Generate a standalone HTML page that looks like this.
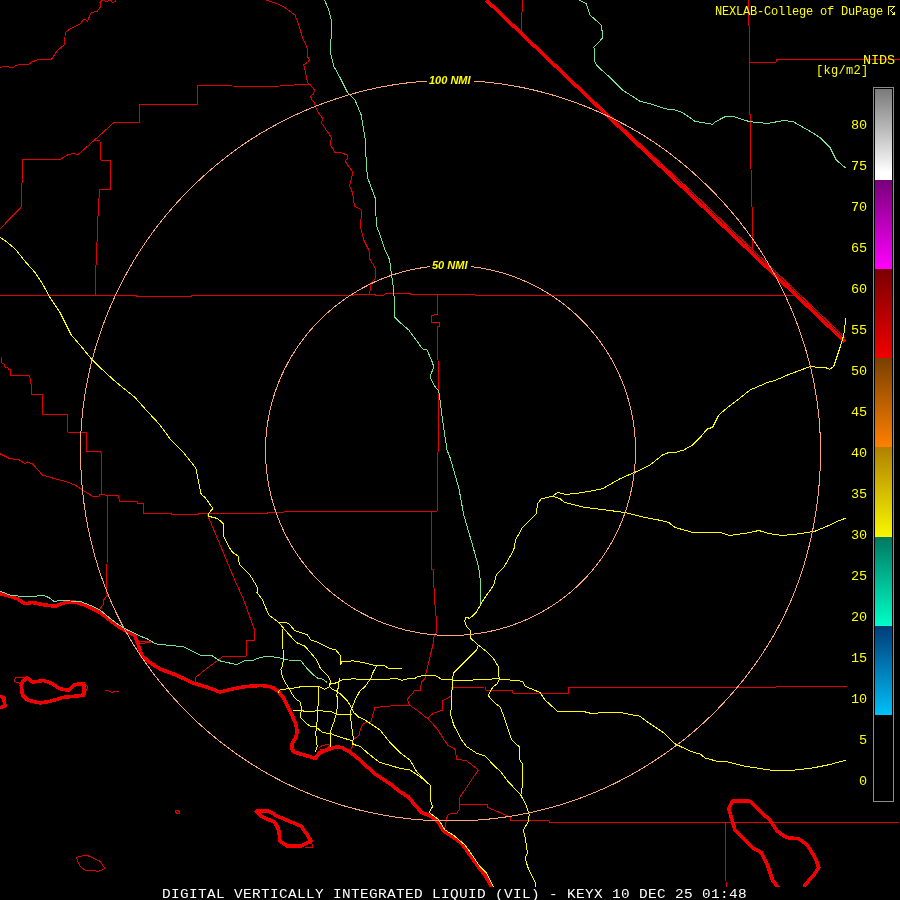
<!DOCTYPE html>
<html><head><meta charset="utf-8"><style>
html,body{margin:0;padding:0;background:#000;width:900px;height:900px;overflow:hidden}
#map{position:absolute;left:0;top:0}
.mono{font-family:"Liberation Mono",monospace;position:absolute;white-space:pre;line-height:1;will-change:transform}
.lab{font-family:"Liberation Mono",monospace;position:absolute;right:33px;color:#ffff00;font-size:13.5px;letter-spacing:-0.1px;line-height:1;text-align:right;will-change:transform}
#cb{position:absolute;left:873px;top:87px;width:19px;height:713px;border:1px solid #8c8c8c}
.seg{position:absolute;left:1px;width:17px}
</style></head><body>
<svg id="map" width="900" height="900" viewBox="0 0 900 900" fill="none" stroke-linejoin="round" stroke-linecap="round" shape-rendering="crispEdges">
<polyline points="0,67.5 5,66 9,67 12.5,68 16,65.5 20,64.5 24,64 29,64 32,62 37,60 41,59 49,59.5 51,60 57,51 64,45 65.5,32.5 69,29.5 76,26 80,24 84,19 87.5,21 91,13 97.5,11 101,6 100,2.5 102.5,0" stroke="#e00000" stroke-width="1"/>
<polyline points="104,0 105,1 108,1 111,0" stroke="#e00000" stroke-width="1"/>
<polyline points="111,0 112.5,2.5 115,1.5 116,0" stroke="#e00000" stroke-width="1"/>
<polyline points="0,228.75 3.75,225 21,207.5 23,159 61,159 67.5,155 74,153 77.5,155 94,140.5 114,122.5 139,122.5 139,104.5 197.5,104.5 198,85.5 225,85.5 236,86.25 276,86.25 293.75,85 310,84.5" stroke="#e00000" stroke-width="1"/>
<polyline points="94,140.5 100,141 100.5,160 110.5,160 110.5,189 99.5,189 97.5,225 97,242.5 95.5,276.25 95.5,295" stroke="#e00000" stroke-width="1"/>
<polyline points="266.25,0 277.5,3.75 285,7.5 295,15 298.75,25 302.5,37.5 307,47.5 308,57.5 309.5,60 307.5,62.5 303.75,64.5 305.5,72.5 307.5,82.5 311.25,86.25 314.5,90 313.75,93.75 310.5,96.25 312,100 314.5,102.5 315.5,107.5 320,115 323,118.75 321.25,122.5 326.25,130 331.25,137.5 330.5,145 335,152.5 342,153 347,155 347.5,158.75 345,161.25 349.5,167.5 353,172.5 351.25,178.75 349.5,186.25 352.5,192.5 354.5,206.25 360,208.75 361.75,211.25 361.25,217.5 360,225 361.25,230 363.75,240 368.75,250 370,256.25 369.5,258.75 375,267.5 375.5,278.75 371.25,282.5 369.5,294.5" stroke="#e00000" stroke-width="1"/>
<polyline points="522.5,0 521.25,32.5" stroke="#e00000" stroke-width="1"/>
<polyline points="748.75,0 749.5,77.5 750.5,150 752.5,225 752.5,250" stroke="#e00000" stroke-width="1"/>
<polyline points="749.5,62 776.25,62 776.25,59.5 900,59.5" stroke="#e00000" stroke-width="1"/>
<polyline points="0,295.5 136.25,295.5 136.25,296.75 191.25,296.75 191.25,295.5 350,295.5 357.5,294.5 375,294.5 376.25,295.5 383.75,295.5 385,293.75 410,293.75 411.25,294.5 475,294.5 475,295.5 795,295.5" stroke="#e00000" stroke-width="1"/>
<polyline points="1.25,357.5 1.25,362.5 3.75,363.75 5,367 7.5,367.5 8.75,369.5 10.5,370 10.5,375.5 29.5,375.5 31.25,385 31.25,394.5 42.5,394.5 42.5,414.25 67.5,414.25 67.5,432 86.25,432 86.25,451.25 100,451.25 101.25,453.75 101.25,494.5" stroke="#e00000" stroke-width="1"/>
<polyline points="437,294.5 437,314.5 431.25,315.5 431.25,322.5 439.5,323 439.5,326.25 437,327 437,340 438.75,375 438.75,450 437,455 437,511.25" stroke="#e00000" stroke-width="1"/>
<polyline points="0,453.75 10,458.75 18.75,459.5 25,463.75 27.5,462 32.5,463.75 42.5,475 57.5,479.5 65,481.25 75,485 82.5,490 92.5,496.25 98.75,496.25 100,494.5 105,495" stroke="#e00000" stroke-width="1"/>
<polyline points="105,495 118,495 119.5,501.25 137.5,501.25 138,503.75 143.75,503.75 143.75,513.75 170.9,513.1 171.7,514.3 198.1,514.3 198.9,513.1 267.3,513.1 268.1,512.3 325,511.25 437,511.25" stroke="#e00000" stroke-width="1"/>
<polyline points="107.5,495 107.5,545 106.25,592.5 107.5,595 103.75,600 103,605 100,608.75" stroke="#e00000" stroke-width="1"/>
<polyline points="207.4,514.6 234.7,580 243.75,600 250,617.5 254.5,629.7 254.5,640.1 246,640.1 246,656.1 223.3,656.1 212,664.6 195.9,676.9 195.9,682.6" stroke="#e00000" stroke-width="1"/>
<polyline points="431.25,511.25 431.25,568.75 433,570 435,605 435.8,613.3 436.7,623.3 436.3,632.5 434.2,635 433.3,643.3 430,656.7 426.7,670 425,678.3 421.7,681.7 420,690.8 414.2,690.8 413.3,692.5 407.5,699.2 409.2,705 416.7,710 428.3,719.2 436.7,728.3 444.2,740 448.3,745.8 455,749.2 456.7,759.2 466.7,760.8 478.3,770 459.2,798.3 460,808.3 456.7,813.3 448.3,814.2 446.7,818.3 445,827.5" stroke="#e00000" stroke-width="1"/>
<polyline points="409.2,705 391.7,705.8 375,707.5 373.3,713.3 370.8,721.7 363.3,723.3 360.6,728.9 358.9,735.6 355.6,737.8 352.8,740 352.8,746.7 350,750" stroke="#e00000" stroke-width="1"/>
<polyline points="428.3,719.2 429.2,716.7 433.3,713.3 442.5,710 442.5,700.8 451.7,695.8 451.7,687.5 485,687 486.25,690.5 512.5,690.5 512.5,693 568.75,693 568.75,687 776.25,687 776.25,686.25 846.25,686.25" stroke="#e00000" stroke-width="1"/>
<polyline points="460.8,804.2 487.5,804.2 487.5,807.5 510,816.7 510.8,820.5 548.75,820.5 550,822.5 898.75,822.5" stroke="#e00000" stroke-width="1"/>
<polyline points="725,822.5 725,855 726.25,887.5" stroke="#e00000" stroke-width="1"/>
<polyline points="139.3,642 144,641 150.6,642 140.2,643.8 139.3,642" stroke="#e00000" stroke-width="1"/>
<polyline points="318.9,748 322,745.5 328,744.4 330,746 326,749 320,750" stroke="#e00000" stroke-width="1"/>
<polyline points="175,811 178,810 180,813 177,814 175,811" stroke="#e00000" stroke-width="1"/>
<polyline points="76.25,857.5 86.25,855 100,861.25 105,868.75 98.75,871.25 85,870 80,866.25 76.25,857.5" stroke="#e00000" stroke-width="1"/>
<polyline points="14,681 16,677 25,677.5 27,680 21,684 14,681" stroke="#e00000" stroke-width="1"/>
<polyline points="83,683 88,687 85,693 83,694" stroke="#e00000" stroke-width="1"/>
<polyline points="105,690.5 109,691 112,692.5 115,691.5 118.75,692" stroke="#e00000" stroke-width="1"/>
<polyline points="311.25,841.25 313,848 305,847" stroke="#e00000" stroke-width="1"/>
<polyline points="486,-0.2 600,106.4 700,199.6 845,337.7" stroke="#e00000" stroke-width="1"/>
<polyline points="0,593.75 10,596.25 17.5,598.75 25,603.75 32.5,602.5 45,605 55,606.25 65,602.5 75,602 85,605 100,612.5 110,620.2 117.6,625.9 127,631.6 134.6,635.3 138.3,644.8 142.1,656.1 151.6,663.7 161,669.3 176.1,675 193.1,683 208,687.5 220,692 232,689 246,686.5 261.1,685.4 270,686.7 274.4,688.3 278.9,692.2 283.3,697.8 286.7,704.4 291.1,713.3 295.6,723.3 297.2,731.1 296.1,736.7 292.2,743.3 291.7,748.9 294.4,752.2 302.2,754.4 310,756.7 315.6,758.3 318.9,753.3 323.3,751.1 330,748.9 336.7,746.7 342.2,747.8 350,752.2 357.8,758.3 375,773.75 390,783.75 400,791.7 408.3,796.7 415,805 421.7,812.5 430,815.8 438.3,821.7 443.3,830.8 450,835 461.7,843.3 470,855 478.3,866.7 485,875 491.7,886.7 493,890" stroke="#f00000" stroke-width="3.6"/>
<polyline points="22.5,681.25 27.5,678 32.5,682 43.75,680.5 52.5,683.75 60,688.75 68.75,690.5 75,684.5 83.75,683.75 83.75,695 75,696.25 62.5,697.5 58.75,698.75 50,701.25 40,703 27.5,700 22.5,695 21.25,685 22.5,681.25" stroke="#f00000" stroke-width="3.6"/>
<polyline points="0,696.25 3.75,697.5 5,706.25 0,707.5" stroke="#f00000" stroke-width="3.6"/>
<polyline points="256.25,811.25 268.75,811.25 277.5,816.25 292.5,822.5 301.25,826.25 307.5,835 311.25,841.25 300,846.25 287.5,846.25 280,841.25 278.75,830 275,822.5 261.25,816.25 256.25,811.25" stroke="#f00000" stroke-width="3.6"/>
<polyline points="780,890 772.5,880 767.5,865 761.25,852.5 752.5,847.5 742.5,837.5 735,830 731.25,817.5 728.75,808.75 732.5,801.25 750,801.25 760,811.25 770,820 777.5,831.25 786.25,837.5 798.75,838.75 807.5,845 816.25,860 818.75,867.5 813.75,875 805,885 803.75,890" stroke="#f00000" stroke-width="3.6"/>
<polyline points="486.2,0 845,341.7" stroke="#f00000" stroke-width="3.6" stroke-linecap="butt"/>
<polyline points="324.5,0 328.75,10 331.25,20 331.25,32.5 330.5,52.5 333.75,66.25 340,77.5 347.5,92.5 355,100 361.25,115 362.5,122.5 365,137.5 365.5,145 366.25,162.5 367.5,177.5 371.25,187.5 375.5,198.75 376.25,225 380,235 385,250 388.75,257.5 390,262.5 391.25,272.5 393.75,290 395,317.5 400,322.5 408.75,330 422.5,348.75 427,350 432.5,362.5 433.75,367.5 430,376.25 433.75,385 438.75,391.25 440,400 442.5,420 447,450 450,457.5 458.75,487.5 463.75,515 472.5,545 478.75,567.5 480.5,582.5 480.5,603.75" stroke="#78e098" stroke-width="1"/>
<polyline points="578.75,0 586.25,3.75 590,15 601.25,25 603,37.5 595,46.25 593.75,47.5 595,50 594.5,61.25 597.5,66.25 610,77.5 622.5,90 640,101.25 650,103.75 665,108.75 675,110 682.5,112.5 695,121.25 712.5,124.25 716.25,121.25 725,116.75 732.5,116.25 740,118.75 750,121.75 762.5,123 770,123 782.5,120.75 792.5,121.25 800,125.5 810,131.25 820,137.5 830,147.5 836.25,160 845,167.5" stroke="#78e098" stroke-width="1"/>
<polyline points="0,591.25 10,595 25,597 43.75,595.5 48.75,597.5 53.75,601.25 60,600.75 80,601.25 92.5,606.25 100,610 110,618.3 117.6,624 127,629.7 138.3,635.3 147.8,639.1 155.3,643.8 172.3,645.7 183.7,646.7 200.7,655.2 212,655.7 219.6,660.8 236.6,664.6 244.1,660.8 251.7,660.8 261.1,657.1 270.6,656.5 280,658 288.3,660 300.6,660.6 308.3,670 316.7,677.8 323.3,679.4 326.7,682.2" stroke="#78e098" stroke-width="1"/>
<polyline points="0,237.5 5,240.5 15,248.75 25,261.25 35,272.5 42.5,283.75 50,297.5 60,312.5 71.25,335 80,345 91.25,358.75 100,367.5 115,381.25 135,397.5 145,408.75 160,425 170.9,440 183.3,452.4 195.8,468 201.2,494.4 205.1,497.5 212.9,508.4 209,513.1 208.2,516.2 217.5,518.5 223.8,524 223.8,536.4 228.4,545.8 232.3,552 238.5,556.6 239.3,564.4 250.2,575.3 257.5,587.5 257,592.5 262.5,600 268.75,615 278.75,622.5 285,630 296.25,642.5 305,646.25 316.7,660 320.6,668.9 327.8,675.6 330.6,681.1 328.9,686.1 332.2,689.4 336.7,691.1 341.1,694.4 346.7,700 351.7,707.8 353.3,712.2 358.9,717.2 365,720 380,730 390,742.5 400,752.5 410,760 416.7,771.7 430,785 430,798.3 432.5,806.7 429.2,812.5 438.3,819.2 445,830 453.3,835 465,845 473.3,856.7 480,866.7 486.7,873.3 493.3,886.7" stroke="#ffff00" stroke-width="1"/>
<polyline points="278.75,622.5 285,622 289.17,624.17 295,630.83 303.33,633.33 307.5,635 310.83,640 318.33,642.5 323.33,645 330,648.33 335.83,650 340,655 340.83,664.17 341.67,661.67 353.33,660.83 363.33,662.5 370,664.2 376.7,665.8 385,665.8 387.5,668 401.7,668" stroke="#ffff00" stroke-width="1"/>
<polyline points="376.7,665.8 373.3,671.7 370.8,678.3 365,686.7 360,690.83 355.83,698.33 351.67,708.33 350,713.33 351.67,726.67 353.3,737.8 352.5,745" stroke="#ffff00" stroke-width="1"/>
<polyline points="282.5,630 283.3,660 282.2,666.7 280.6,669.4 281.7,671.7 282.2,676.7 285,682.2 288.3,687.2 291.1,692.2 293.9,696.7 296.7,700 300,701.7 301.1,706.7 301.7,710.6 300,714.4 301.1,718.3 305.6,722.8 310,726.1 315.6,726.7 318.9,729.4 322.8,732.8 330.6,733.3 335.6,735.6 342.2,737.8 352.2,740.6 353.3,744.4 360,746.25 370,755 380,762.5 400,768.3 410,770 420,776.7 430,785" stroke="#ffff00" stroke-width="1"/>
<polyline points="278.3,692.2 280,690 290,688.3 298.9,687.6 300,686.7 308.3,686.4 318.9,686.4 324.4,689.4 328.9,687.2 330.6,683.9 336.7,682.8 340,680.6 343.3,679.4 353.3,678.9 364.4,679.4 370,680 386.7,679.2 396.7,678.7 401.7,680.3 410,678.3 415,678.3 418.3,676.3 426.7,675.3 435,675.3 441.7,679.2 453.3,680 463.3,680.8 476.7,679.7 497.5,678.75 522.5,681.25 525,686.25 540,692.5 545,700 557.5,711.25 582.5,711.25 592.5,713.75 605,712 620,712.5 640,716.25 650,723.75 665,733.75 675,743.75 682.5,747.5 693.75,752.5 700,753.75 705,758 720,762 725,761.25 730,762.5 745,766.25 770,770 795,770 812.5,768 830,764.5 846.25,760" stroke="#ffff00" stroke-width="1"/>
<polyline points="318.9,686.4 317.8,711.1 316.7,726.7 315.6,733.3 316.7,741.1 317.2,746.7 315.6,751.7" stroke="#ffff00" stroke-width="1"/>
<polyline points="293.9,710.6 302.2,710.6 305.6,711.7 314.4,711.1 317.8,710.6 324.4,711.1 330,711.1 336.7,714.4 351.1,714.4" stroke="#ffff00" stroke-width="1"/>
<polyline points="339.4,678.9 337.8,690 336.7,695.6 337.8,698.9 337.2,707.8 336.1,714.4 333.9,722.2 331.1,728.9 330.6,733.3 330.6,746.7" stroke="#ffff00" stroke-width="1"/>
<polyline points="483.3,600 493.75,585 496.25,575 503.75,567.5 513.75,550 515.5,540 522.5,527.5 536.25,513.75 537.5,503.75 541.25,498.75 552.5,496.25 560,498.75 565,502.5 582.5,507 600,509.25 625,512.5 645,517.5 662.5,520.75 668.75,522.5 675,527.5 695,533 720,532.5 730,535.5 750,532.5 758.75,530.5 770,533.75 782.5,535.5 800,533.75 815,531.25 830,525 838.75,520.75 846.25,518" stroke="#ffff00" stroke-width="1"/>
<polyline points="483.3,600 476.7,611.7 470,618.3 465.8,617.5 464.7,620.8 466.7,626.7 470,630 470.8,638.3 478.3,645 486.7,651.7 493.3,658.3 498.3,666.7 499.2,680 496.7,684.2 493.3,686.7 490,691.7 488.3,695.8 495,703.3 500,706.7 503.3,715 508.3,730 511.7,740 519.2,746.7 520,760 523,765 522.5,785 520.8,795 526.7,806.7 529.2,815 528.3,821.7 523.3,830 525,836.7 527.5,853.3 525,858.3 528.3,868.3 535,881.7 535.3,887" stroke="#ffff00" stroke-width="1"/>
<polyline points="478.3,645 476.7,650 471.7,655 463.3,663.3 453.3,673.3 452.5,681.7 451.7,695 450.8,715 453.75,725 461.7,740 466.7,746.7 476.7,753.3 485,755.8 495,766.7 500,770.8 508.3,781.7 520,794.2" stroke="#ffff00" stroke-width="1"/>
<polyline points="552.5,496.25 557.5,492.5 565,494.25 575,493.75 590,491.25 602.5,488.75 620,478.75 640,470 650,465 662.5,455 667.5,453 675,452.5 683.75,450 692.5,445 700,437.5 707.5,428.75 712.5,427.5 718.75,415 727.5,407.5 737.5,400 750,390 767.5,382.5 775,380.5 787.5,375 807.5,367.5 811.25,366.25 820,368 825,367.5 830,369.25 833.75,366.25 840,347.5 843.75,335 845,325 845.75,318" stroke="#ffff00" stroke-width="1"/>
<polyline points="820.5,450.5 820.45,456.96 820.3,463.41 820.05,469.87 819.7,476.32 819.25,482.76 818.69,489.2 818.04,495.63 817.28,502.05 816.41,508.45 815.45,514.85 814.37,521.23 813.19,527.59 811.9,533.94 810.51,540.26 809,546.56 807.39,552.84 805.66,559.08 803.82,565.3 801.87,571.49 799.81,577.64 797.63,583.75 795.34,589.82 792.93,595.85 790.41,601.84 787.78,607.78 785.03,613.66 782.17,619.5 779.2,625.27 776.12,630.99 772.92,636.65 769.62,642.25 766.21,647.78 762.7,653.24 759.08,658.64 755.37,663.97 751.56,669.23 747.65,674.42 743.66,679.54 739.58,684.59 735.41,689.57 731.16,694.48 726.84,699.31 722.43,704.08 717.95,708.78 713.4,713.4 708.77,717.95 704.05,722.4 699.24,726.76 694.36,731.03 689.39,735.2 684.35,739.28 679.24,743.27 674.06,747.17 668.81,750.97 663.5,754.69 658.13,758.32 652.7,761.86 647.22,765.32 641.69,768.69 636.1,771.97 630.46,775.16 624.76,778.24 619.01,781.23 613.21,784.11 607.36,786.88 601.45,789.55 595.5,792.11 589.51,794.56 583.47,796.91 577.4,799.15 571.28,801.28 565.13,803.3 558.95,805.22 552.73,807.02 546.48,808.71 540.21,810.3 533.91,811.77 527.58,813.14 521.23,814.4 514.87,815.54 508.48,816.58 502.08,817.51 495.66,818.33 489.23,819.04 482.8,819.64 476.35,820.13 469.89,820.51 463.43,820.78 456.97,820.95 450.5,821 444.03,820.95 437.57,820.78 431.11,820.51 424.65,820.13 418.2,819.64 411.76,819.05 405.33,818.34 398.92,817.53 392.52,816.6 386.13,815.57 379.76,814.43 373.41,813.17 367.08,811.81 360.78,810.34 354.5,808.76 348.25,807.07 342.04,805.27 335.85,803.36 329.69,801.35 323.58,799.22 317.5,796.98 311.46,794.64 305.46,792.19 299.51,789.63 293.6,786.96 287.75,784.19 281.94,781.31 276.19,778.33 270.49,775.24 264.85,772.06 259.27,768.77 253.74,765.38 248.28,761.9 242.87,758.32 237.53,754.65 232.26,750.89 227.05,747.03 221.9,743.09 216.83,739.05 211.83,734.93 206.91,730.72 202.05,726.43 197.27,722.05 192.57,717.59 187.95,713.05 183.41,708.43 178.94,703.74 174.54,698.97 170.23,694.14 165.99,689.23 161.84,684.25 157.77,679.21 153.79,674.09 149.9,668.9 146.1,663.64 142.4,658.31 138.8,652.92 135.3,647.46 131.89,641.94 128.6,636.35 125.41,630.7 122.32,624.99 119.35,619.23 116.48,613.41 113.73,607.54 111.08,601.62 108.55,595.65 106.13,589.64 103.82,583.58 101.62,577.48 99.53,571.35 97.55,565.18 95.69,558.98 93.93,552.74 92.29,546.48 90.75,540.2 89.33,533.88 88.01,527.55 86.8,521.2 85.7,514.82 84.71,508.44 83.82,502.03 83.04,495.62 82.37,489.19 81.79,482.76 81.33,476.32 80.97,469.87 80.71,463.41 80.55,456.96 80.5,450.5 80.56,444.04 80.73,437.59 81.03,431.14 81.44,424.69 81.96,418.26 82.6,411.83 83.36,405.42 84.23,399.02 85.22,392.65 86.32,386.28 87.53,379.95 88.86,373.63 90.29,367.34 91.84,361.08 93.49,354.84 95.26,348.64 97.13,342.46 99.11,336.33 101.19,330.22 103.38,324.16 105.67,318.13 108.06,312.15 110.56,306.2 113.15,300.3 115.84,294.45 118.63,288.64 121.52,282.88 124.51,277.17 127.59,271.51 130.76,265.9 134.03,260.35 137.4,254.86 140.87,249.42 144.43,244.06 148.09,238.75 151.84,233.51 155.68,228.34 159.61,223.23 163.63,218.2 167.73,213.23 171.92,208.34 176.2,203.52 180.55,198.77 184.99,194.1 189.51,189.51 194.1,184.99 198.76,180.54 203.49,176.17 208.29,171.87 213.17,167.66 218.11,163.52 223.12,159.47 228.2,155.5 233.36,151.63 238.58,147.84 243.87,144.16 249.23,140.57 254.65,137.08 260.14,133.7 265.7,130.42 271.31,127.24 276.98,124.16 282.7,121.17 288.47,118.28 294.28,115.49 300.15,112.8 306.06,110.21 312.01,107.72 318,105.33 324.04,103.05 330.11,100.87 336.22,98.79 342.37,96.82 348.55,94.96 354.76,93.2 361.01,91.56 367.28,90.02 373.57,88.59 379.9,87.28 386.24,86.07 392.61,84.98 398.99,84 405.39,83.14 411.81,82.38 418.24,81.75 424.68,81.23 431.13,80.82 437.58,80.53 444.04,80.36 450.5,80.3 456.96,80.36 463.42,80.53 469.87,80.82 476.32,81.23 482.76,81.76 489.19,82.39 495.61,83.15 502.01,84.02 508.39,85 514.75,86.1 521.1,87.31 527.42,88.63 533.71,90.06 539.98,91.6 546.22,93.25 552.43,95.01 558.61,96.88 564.76,98.85 570.87,100.93 576.94,103.12 582.97,105.41 588.96,107.8 594.91,110.29 600.82,112.88 606.68,115.58 612.49,118.37 618.26,121.26 623.97,124.24 629.64,127.33 635.25,130.5 640.8,133.78 646.29,137.18 651.7,140.68 657.05,144.28 662.32,147.99 667.52,151.79 672.66,155.69 677.71,159.68 682.7,163.75 687.62,167.91 692.48,172.14 697.26,176.45 701.98,180.82 706.63,185.27 711.21,189.79 715.72,194.38 720.15,199.05 724.5,203.79 728.77,208.61 732.95,213.5 737.05,218.46 741.06,223.49 744.98,228.59 748.81,233.76 752.55,239 756.2,244.3 759.76,249.67 763.22,255.09 766.58,260.58 769.85,266.12 773.02,271.72 776.1,277.38 779.09,283.08 781.98,288.83 784.78,294.62 787.48,300.47 790.08,306.36 792.59,312.29 795,318.26 797.31,324.27 799.51,330.33 801.61,336.42 803.61,342.54 805.5,348.7 807.29,354.9 808.97,361.12 810.53,367.38 811.99,373.66 813.34,379.97 814.57,386.3 815.69,392.66 816.69,399.03 817.58,405.43 818.35,411.84 819.01,418.26 819.54,424.69 819.96,431.14 820.26,437.59 820.44,444.04 820.5,450.5" stroke="#f5a578" stroke-width="1"/>
<polyline points="635.5,450.5 635.39,456.96 635.06,463.41 634.52,469.84 633.75,476.25 632.77,482.64 631.57,488.99 630.15,495.29 628.52,501.55 626.68,507.74 624.61,513.87 622.34,519.93 619.86,525.9 617.17,531.79 614.27,537.58 611.17,543.26 607.87,548.83 604.37,554.29 600.68,559.61 596.8,564.8 592.74,569.85 588.5,574.75 584.08,579.5 579.5,584.08 574.75,588.5 569.85,592.74 564.8,596.8 559.61,600.68 554.29,604.37 548.83,607.87 543.26,611.17 537.58,614.27 531.79,617.17 525.9,619.86 519.93,622.34 513.87,624.61 507.74,626.68 501.55,628.52 495.29,630.15 488.99,631.57 482.64,632.77 476.25,633.75 469.84,634.52 463.41,635.06 456.96,635.39 450.5,635.5 444.04,635.39 437.59,635.06 431.16,634.5 424.75,633.73 418.37,632.73 412.02,631.51 405.73,630.08 399.48,628.43 393.29,626.56 387.18,624.48 381.13,622.19 375.18,619.68 369.31,616.97 363.53,614.06 357.87,610.94 352.32,607.63 346.88,604.12 341.57,600.42 336.4,596.54 331.37,592.48 326.48,588.24 321.75,583.83 317.17,579.25 312.76,574.52 308.52,569.63 304.46,564.6 300.58,559.43 296.88,554.12 293.37,548.68 290.06,543.13 286.94,537.47 284.03,531.69 281.32,525.82 278.81,519.87 276.52,513.82 274.44,507.71 272.57,501.52 270.92,495.27 269.49,488.98 268.27,482.63 267.27,476.25 266.5,469.84 265.94,463.41 265.61,456.96 265.5,450.5 265.61,444.04 265.96,437.6 266.53,431.16 267.33,424.76 268.35,418.38 269.6,412.05 271.07,405.76 272.76,399.53 274.67,393.37 276.79,387.28 279.13,381.26 281.67,375.33 284.42,369.5 287.37,363.76 290.51,358.13 293.85,352.61 297.38,347.22 301.09,341.95 304.98,336.81 309.04,331.8 313.28,326.94 317.67,322.23 322.23,317.67 326.94,313.28 331.8,309.04 336.81,304.98 341.95,301.09 347.22,297.38 352.61,293.85 358.13,290.51 363.76,287.37 369.5,284.42 375.33,281.67 381.26,279.13 387.28,276.79 393.37,274.67 399.53,272.76 405.76,271.07 412.05,269.6 418.38,268.35 424.76,267.33 431.16,266.53 437.6,265.96 444.04,265.61 450.5,265.5 456.96,265.61 463.4,265.95 469.84,266.51 476.25,267.3 482.62,268.31 488.96,269.54 495.26,271 501.49,272.67 507.67,274.55 513.77,276.66 519.8,278.97 525.75,281.49 531.6,284.22 537.35,287.15 543,290.29 548.54,293.61 553.95,297.13 559.24,300.83 564.4,304.72 569.42,308.78 574.29,313.02 579.01,317.42 583.58,321.99 587.98,326.71 592.22,331.58 596.28,336.6 600.17,341.76 603.87,347.05 607.39,352.46 610.71,358 613.85,363.65 616.78,369.4 619.51,375.25 622.03,381.2 624.34,387.23 626.45,393.33 628.33,399.51 630,405.74 631.46,412.04 632.69,418.38 633.7,424.75 634.49,431.16 635.05,437.6 635.39,444.04 635.5,450.5" stroke="#f5a578" stroke-width="1"/>
<rect x="427" y="74" width="47" height="12" fill="#000"/>
<rect x="430" y="258" width="41" height="12" fill="#000"/>
</svg>
<div style="position:absolute;left:428.5px;top:75.3px;font:italic bold 11px 'Liberation Sans',sans-serif;color:#ffff00;line-height:1;will-change:transform">100 NMI</div>
<div style="position:absolute;left:431.5px;top:260.3px;font:italic bold 11px 'Liberation Sans',sans-serif;color:#ffff00;line-height:1;will-change:transform">50 NMI</div>
<div class="mono" style="left:715px;top:6px;font-size:12px;letter-spacing:-0.2px;color:#ffff00">NEXLAB-College of DuPage</div>
<svg style="position:absolute;left:0;top:0" width="900" height="30" shape-rendering="crispEdges"><path d="M888.5 15V6.5H894.5M893.5 7.5L890.5 10.5L894 14" stroke="#ffff00" fill="none" stroke-width="1"/><path d="M891.5 15H895V11.5Z" fill="#ffff00"/></svg>
<div class="mono" style="left:863px;top:53.6px;font-size:13.5px;letter-spacing:-0.1px;color:#ffff00">NIDS</div>
<div class="mono" style="left:816px;top:64.5px;font-size:12px;letter-spacing:0.3px;color:#ffff00">[kg/m2]</div>
<div id="cb">
<div class="seg" style="top:1px;height:91px;background:linear-gradient(#7a7a7a,#ffffff 92%)"></div>
<div class="seg" style="top:92px;height:89px;background:linear-gradient(#780078,#ff00ff)"></div>
<div class="seg" style="top:181px;height:89px;background:linear-gradient(#7a0000,#f00000)"></div>
<div class="seg" style="top:270px;height:89px;background:linear-gradient(#784000,#ff8000)"></div>
<div class="seg" style="top:359px;height:90px;background:linear-gradient(#b08000,#f8f800)"></div>
<div class="seg" style="top:449px;height:89px;background:linear-gradient(#007860,#00ffc8)"></div>
<div class="seg" style="top:538px;height:89px;background:linear-gradient(#003c78,#00c0f8)"></div>
</div>
<div class="lab" style="top:774.65px">0</div>
<div class="lab" style="top:733.65px">5</div>
<div class="lab" style="top:692.65px">10</div>
<div class="lab" style="top:651.65px">15</div>
<div class="lab" style="top:610.65px">20</div>
<div class="lab" style="top:569.65px">25</div>
<div class="lab" style="top:528.65px">30</div>
<div class="lab" style="top:487.65px">35</div>
<div class="lab" style="top:446.65px">40</div>
<div class="lab" style="top:405.65px">45</div>
<div class="lab" style="top:364.65px">50</div>
<div class="lab" style="top:323.65px">55</div>
<div class="lab" style="top:282.65px">60</div>
<div class="lab" style="top:241.65px">65</div>
<div class="lab" style="top:200.65px">70</div>
<div class="lab" style="top:159.65px">75</div>
<div class="lab" style="top:118.65px">80</div>

<div style="position:absolute;left:0;top:887px;width:900px;height:13px;background:#000"></div>
<div class="mono" style="left:162px;top:888.5px;font-size:12px;letter-spacing:0.3px;color:#fff;transform:scaleX(1.2);transform-origin:0 0">DIGITAL VERTICALLY INTEGRATED LIQUID (VIL) - KEYX 10 DEC 25 01:48</div>
</body></html>
